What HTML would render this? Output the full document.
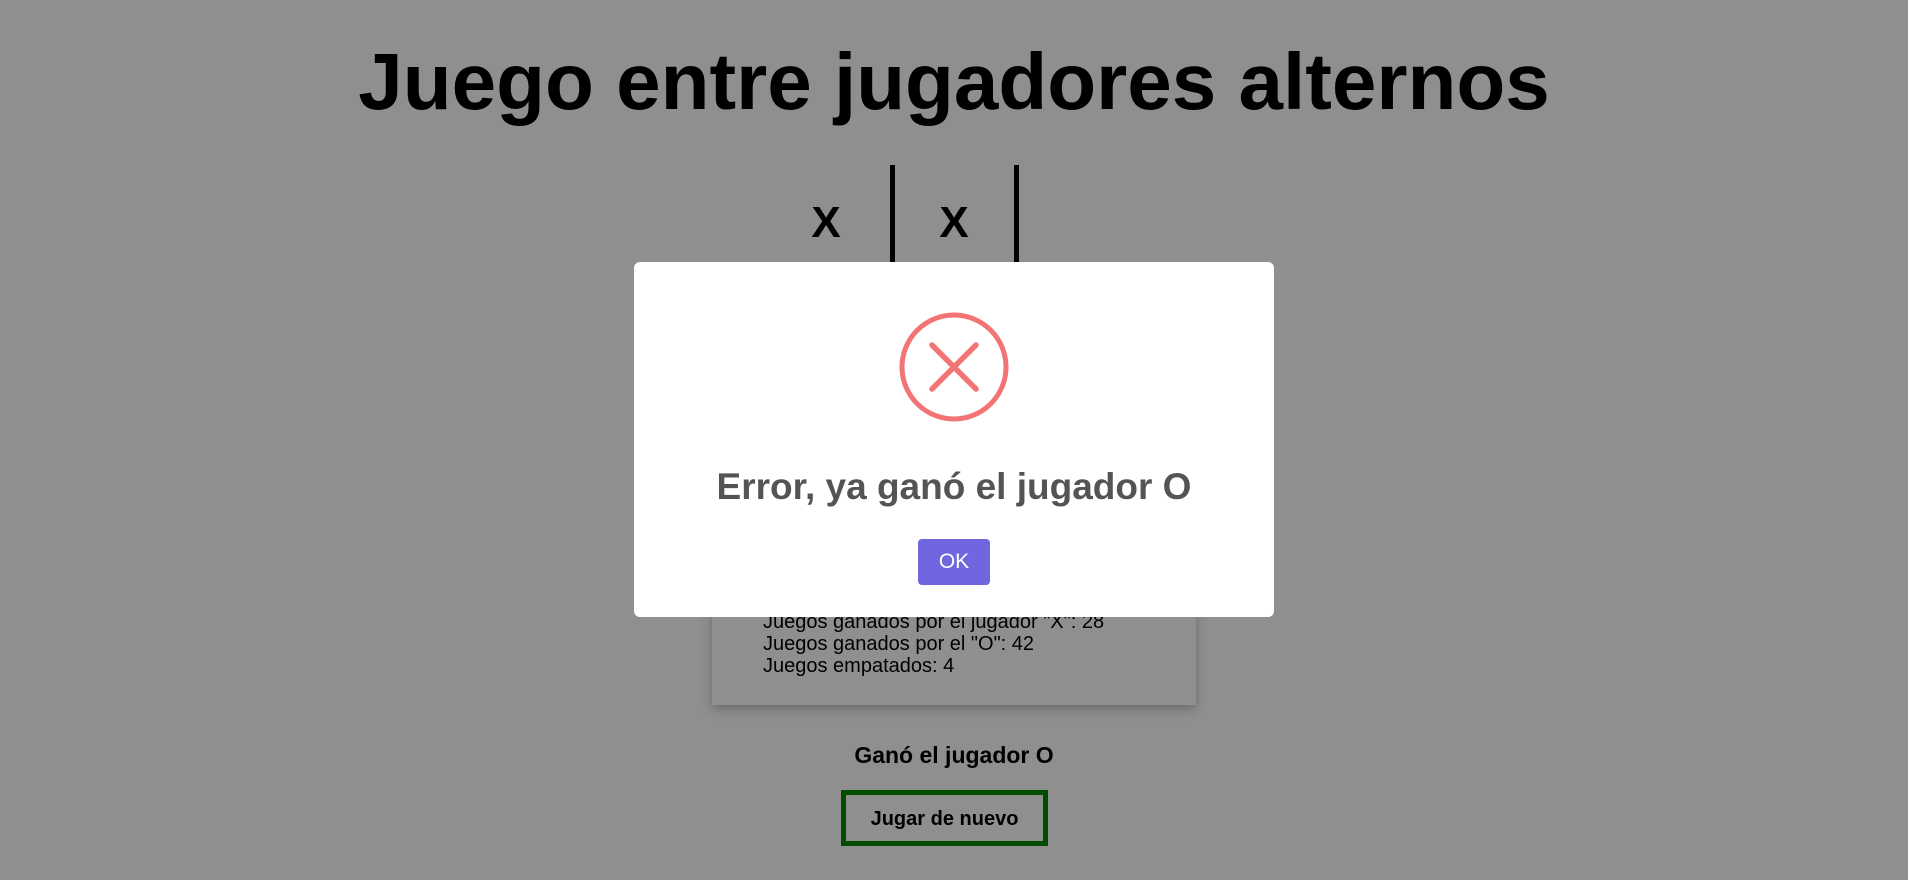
<!DOCTYPE html>
<html><head><meta charset="utf-8"><style>
html,body{margin:0;padding:0;width:1908px;height:880px;overflow:hidden;background:#8f8f8f;font-family:"Liberation Sans",Arial,sans-serif;color:#000}
.a{position:absolute}
h1{position:absolute;left:0;width:1908px;top:32px;margin:0;text-align:center;font-size:80px;font-weight:bold;line-height:100px}
.vl{position:absolute;top:165px;width:5px;height:100px;background:#000}
.xx{position:absolute;top:198px;font-size:44px;font-weight:bold;line-height:50px;width:80px;text-align:center}
.card{position:absolute;left:712px;top:560px;width:484px;height:145px;box-shadow:0 4px 10px rgba(0,0,0,.25)}
.card div{position:absolute;left:51px;font-size:20px;line-height:22px}
.modal{position:absolute;left:634px;top:262px;width:640px;height:355px;background:#fff;border-radius:6px}
</style></head><body>
<h1>Juego entre jugadores alternos</h1>
<div class="xx" style="left:786px">X</div>
<div class="vl" style="left:890px"></div>
<div class="xx" style="left:914px">X</div>
<div class="vl" style="left:1014px"></div>
<div class="card">
<div style="top:51px">Juegos ganados por el jugador "X": 28</div>
<div style="top:73px">Juegos ganados por el "O": 42</div>
<div style="top:95px">Juegos empatados: 4</div>
</div>
<div class="a" style="left:0;width:1908px;top:742px;text-align:center;font-weight:bold;font-size:23px;line-height:26px">Ganó el jugador O</div>
<div class="a" style="left:841px;top:790px;width:197px;height:46px;border:5px solid #004d00;text-align:center;font-weight:bold;font-size:20px;line-height:48px">Jugar de nuevo</div>
<div class="modal">
<svg class="a" style="left:260px;top:45px" width="120" height="120" viewBox="0 0 120 120"><circle cx="60" cy="60" r="52" fill="none" stroke="#f27474" stroke-width="5"/><path d="M38 38 L82 82 M82 38 L38 82" stroke="#f27474" stroke-width="5.5" stroke-linecap="round"/></svg>
<div class="a" style="left:0;width:640px;top:202px;text-align:center;font-weight:bold;font-size:37px;line-height:46px;color:#545454">Error, ya ganó el jugador O</div>
<div class="a" style="left:284px;top:277px;width:72px;height:46px;background:#7066e0;border-radius:4px;color:#fff;font-size:21px;line-height:46px;text-align:center">OK</div>
</div>
</body></html>
